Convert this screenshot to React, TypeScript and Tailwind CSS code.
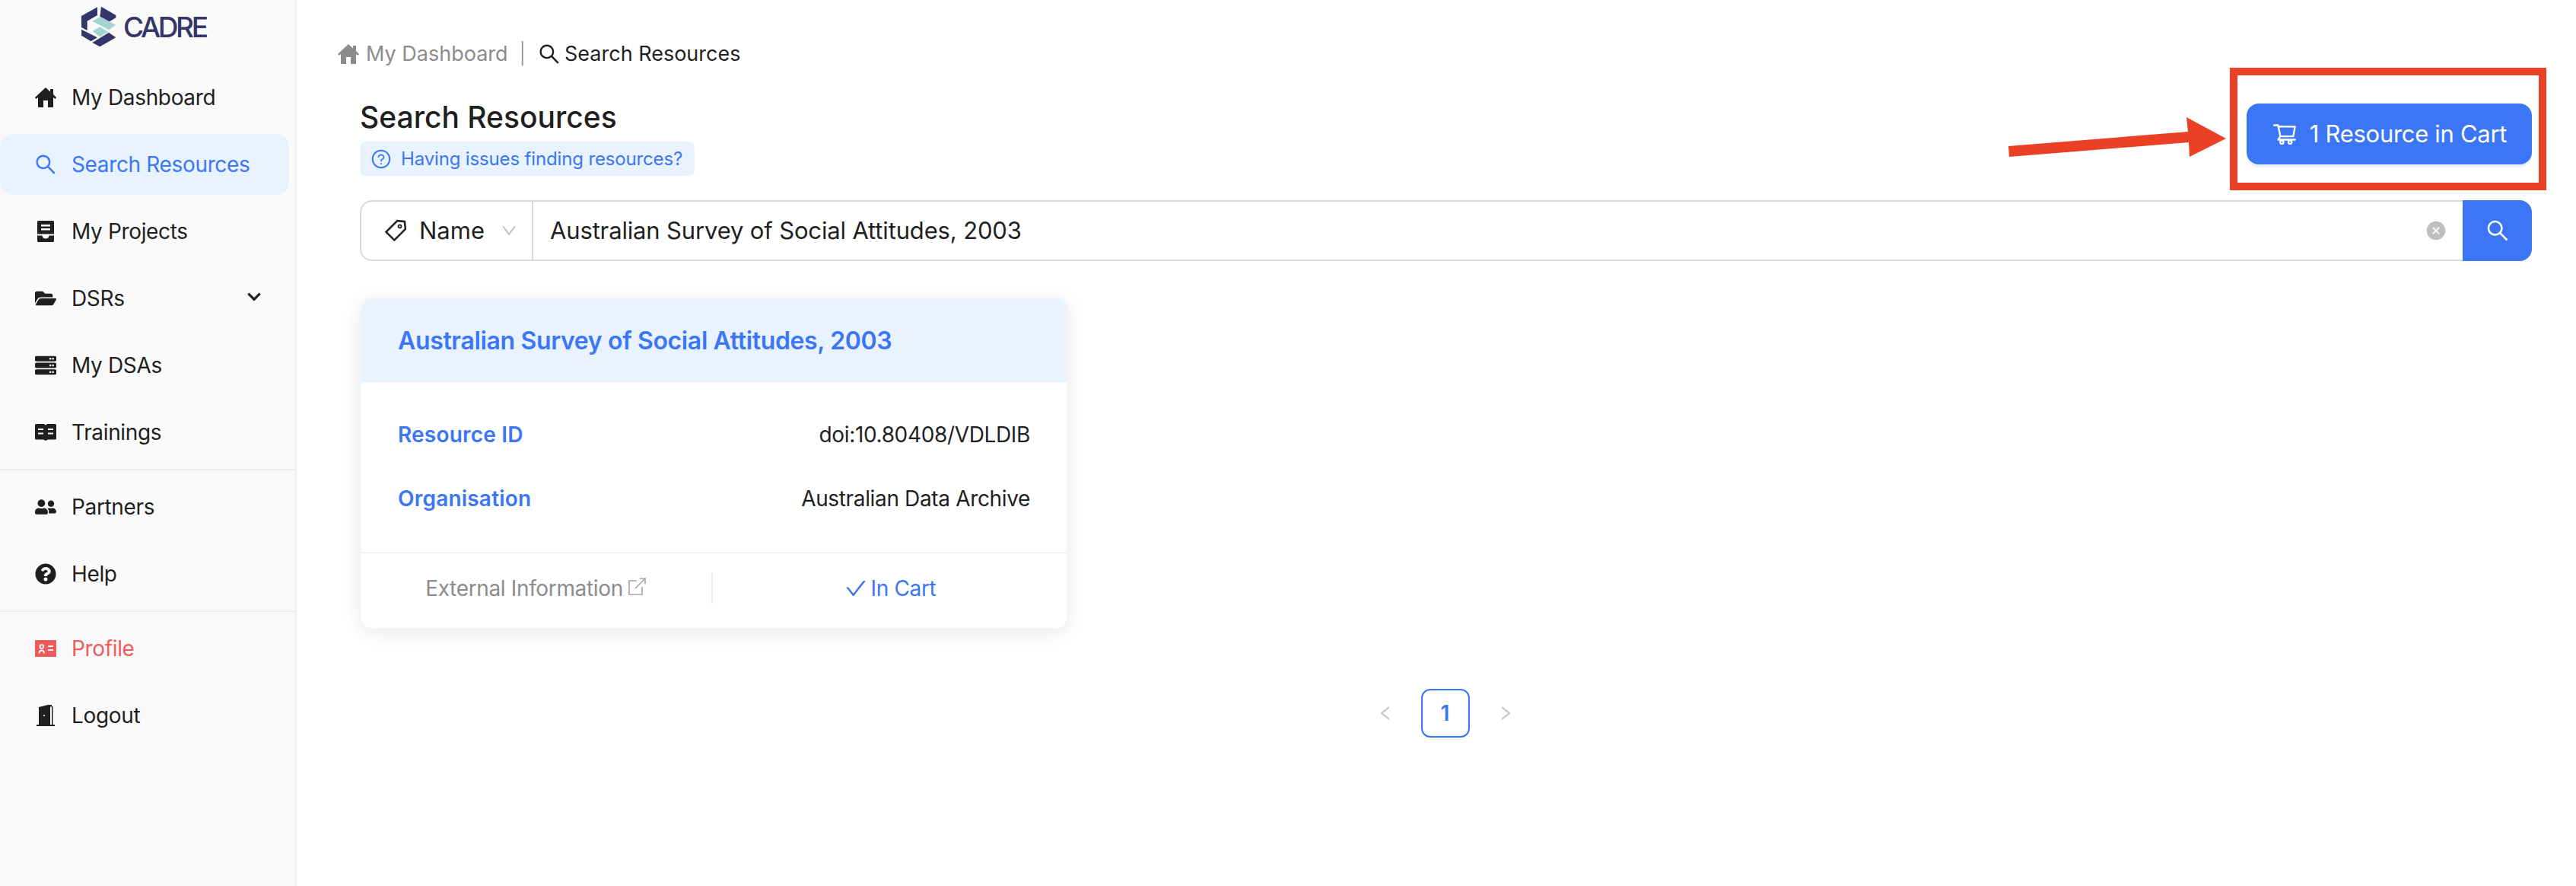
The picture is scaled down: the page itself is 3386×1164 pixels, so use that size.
import React from "react";
import { FaFolderOpen, FaServer, FaUserFriends, FaQuestionCircle, FaChevronDown } from "react-icons/fa";
import { AiOutlineSearch, AiOutlineQuestionCircle, AiOutlineTag, AiOutlineDown, AiOutlineShoppingCart, AiOutlineCheck, AiOutlineLeft, AiOutlineRight, AiFillCloseCircle } from "react-icons/ai";

const ic = "w-[28px] h-[28px] shrink-0";

function HomeIcon({ className }: { className: string }) {
  return (
    <svg className={className} viewBox="0 0 28 28">
      <path fill="currentColor" d="M14 1 L20 6.5 V3 H24 V10 L28 14 L26.5 16 L24 14 V27 H17 V18 H11 V27 H4 V14 L1.5 16 L0 14 Z" />
    </svg>
  );
}

function Logo() {
  return (
    <div className="h-[88px] flex items-start pl-[106px] pt-[8px]">
      <div className="flex items-center gap-[8px]">
        <svg width="48" height="54" viewBox="320 26 142 162">
          <path d="M400 28 L458 62 V72 L430 88 L395 68 Z" fill="#343569" />
          <path d="M385 30 L322 65 V110 L345 122 V85 L385 62 Z" fill="#343569" />
          <path d="M322 118 L385 150 L360 165 L322 142 Z" fill="#343569" />
          <path d="M395 186 L458 150 L430 130 L365 170 Z" fill="#343569" />
          <path d="M365 85 L398 68 L458 100 L430 120 Z" fill="#a3d5d0" />
          <path d="M365 125 L395 108 L428 128 L395 147 Z" fill="#a3d5d0" />
        </svg>
        <span className="font-medium text-[37px] leading-none tracking-[-3.4px] text-[#343569]">CADRE</span>
      </div>
    </div>
  );
}

function NavItem({ icon, label, active, danger, chevron }: { icon: React.ReactNode; label: string; active?: boolean; danger?: boolean; chevron?: boolean }) {
  return (
    <div
      className={`h-[80px] mb-[8px] w-[380px] rounded-[16px] flex items-center pl-[46px] pr-[36px] gap-[20px] text-[28px] tracking-[-0.35px] ${
        active ? "bg-[#e8f3ff] text-[#3b76f6]" : danger ? "text-[#ef5b5b]" : "text-[#1f1f1f]"
      }`}
    >
      {icon}
      <span className="flex-1 whitespace-nowrap">{label}</span>
      {chevron && <FaChevronDown className="w-[20px] h-[20px] text-[#1f1f1f] -mt-[4px]" />}
    </div>
  );
}

function ProjectsIcon() {
  return (
    <svg className={ic} viewBox="0 0 28 28">
      <path fillRule="evenodd" fill="currentColor" d="M3 1.5 A1.5 1.5 0 0 1 4.5 0 h19 A1.5 1.5 0 0 1 25 1.5 v25 a1.5 1.5 0 0 1 -1.5 1.5 h-19 A1.5 1.5 0 0 1 3 26.5 Z M8 5 v2.4 h12 v-2.4 Z M8 10 v2.4 h12 v-2.4 Z M3 17.5 v2 h6.4 c0.6 3 2.4 4 4.6 4 s4 -1 4.6 -4 h6.4 v-2 Z" />
    </svg>
  );
}

function BookIcon() {
  return (
    <svg className={ic} viewBox="0 0 28 28">
      <path fillRule="evenodd" fill="currentColor" d="M1.5 3 H12 l2 1.5 L16 3 H26.5 A1.5 1.5 0 0 1 28 4.5 V22 a1.5 1.5 0 0 1 -1.5 1.5 H17 l-3 1.5 -3 -1.5 H1.5 A1.5 1.5 0 0 1 0 22 V4.5 A1.5 1.5 0 0 1 1.5 3 Z M4 9 v2 h7 v-2 Z M4 14.5 v2 h7 v-2 Z M17 9 v2 h7 v-2 Z M17 14.5 v2 h7 v-2 Z" />
    </svg>
  );
}

function CardIcon() {
  return (
    <svg className={ic} viewBox="0 0 28 28">
      <path fillRule="evenodd" fill="currentColor" d="M0 3 H28 V25 H0 Z M12 11.5 a3.2 3.2 0 1 0 -6.4 0 a3.2 3.2 0 1 0 6.4 0 Z M10.2 11.5 a1.4 1.4 0 1 1 -2.8 0 a1.4 1.4 0 1 1 2.8 0 Z M4.5 20.5 h2 c0.2 -2 1 -3 2.3 -3 s2.2 1 2.4 3 h2 c-0.2 -3.5 -2 -5 -4.4 -5 s-4.1 1.5 -4.3 5 Z M17 10 v2 h7 v-2 Z M17 15 v2 h7 v-2 Z" />
    </svg>
  );
}

function DoorIcon() {
  return (
    <svg className={ic} viewBox="0 0 28 28">
      <path fillRule="evenodd" fill="currentColor" d="M5 26 V3 L17 0 H22 V2 H23.5 V26 H26 V28 H2 V26 Z M20 2.6 V26 H22 V2.6 Z M12 13 a1 1 0 1 0 0.01 0 Z" />
    </svg>
  );
}

function ExternalIcon() {
  return (
    <svg className="w-[28px] h-[28px] text-[#a6a6a6] -mt-[4px]" viewBox="0 0 28 28" fill="none" stroke="currentColor" strokeWidth="1.6">
      <path d="M14 6 H4 V24 H21 V14" />
      <path d="M12 16 L25 3 M18 3 H25 V10" />
    </svg>
  );
}

function Sidebar() {
  return (
    <aside className="w-[390px] shrink-0 bg-[#fafafa] border-r-[2px] border-[#f0f0f0] min-h-[1164px]">
      <Logo />
      <NavItem icon={<HomeIcon className={ic} />} label="My Dashboard" />
      <NavItem icon={<AiOutlineSearch className="w-[32px] h-[32px] -mx-[2px] shrink-0" />} label="Search Resources" active />
      <NavItem icon={<ProjectsIcon />} label="My Projects" />
      <NavItem icon={<FaFolderOpen className={ic} />} label="DSRs" chevron />
      <NavItem icon={<FaServer className={ic} />} label="My DSAs" />
      <NavItem icon={<BookIcon />} label="Trainings" />
      <div className="h-[2px] bg-[#f0f0f0] mb-[8px]" />
      <NavItem icon={<FaUserFriends className={ic} />} label="Partners" />
      <NavItem icon={<FaQuestionCircle className={ic} />} label="Help" />
      <div className="h-[2px] bg-[#f0f0f0] mb-[8px]" />
      <NavItem icon={<CardIcon />} label="Profile" danger />
      <NavItem icon={<DoorIcon />} label="Logout" />
    </aside>
  );
}

function Row({ label, value }: { label: string; value: string }) {
  return (
    <div className="flex justify-between items-center h-[44px] text-[28px]">
      <span className="font-semibold tracking-[0.2px] text-[#3b76f6]">{label}</span>
      <span className="text-[#1f1f1f] tracking-[-0.35px]">{value}</span>
    </div>
  );
}

function Card() {
  return (
    <div className="w-[931px] rounded-[16px] bg-white shadow-[0_4px_24px_rgba(0,0,0,0.09)] border-[2px] border-[#f5f5f5] overflow-hidden">
      <div className="h-[109px] bg-[#e8f3ff] flex items-center pl-[48px] text-[32px] tracking-[-0.35px] font-semibold text-[#3b76f6]">
        Australian Survey of Social Attitudes, 2003
      </div>
      <div className="px-[48px] pt-[47px] pb-[48px] flex flex-col gap-[40px] border-b-[2px] border-[#f0f0f0]">
        <Row label="Resource ID" value="doi:10.80408/VDLDIB" />
        <Row label="Organisation" value="Australian Data Archive" />
      </div>
      <div className="flex items-center h-[98px] pb-[6px] text-[28px] tracking-[-0.35px]">
        <div className="w-[462px] h-[42px] flex items-center justify-center gap-[4px] border-r-[2px] border-[#f0f0f0] text-[#8c8c8c]">
          External Information
          <ExternalIcon />
        </div>
        <div className="flex-1 flex items-center justify-center gap-[4px] text-[#3b76f6]">
          <AiOutlineCheck className="w-[32px] h-[32px]" />
          In Cart
        </div>
      </div>
    </div>
  );
}

export default function App() {
  return (
    <div className="relative flex w-[3386px] h-[1164px] overflow-hidden bg-white font-['Inter',sans-serif]">
      <Sidebar />
      <main className="flex-1 pt-[51px]">
        <div className="pl-[54px] h-[40px] flex items-center text-[27px] text-[#8c8c8c]">
          <HomeIcon className="w-[28px] h-[28px] mr-[9px]" />
          <span>My Dashboard</span>
          <span className="mx-[15px] text-[#8c8c8c] font-light">|</span>
          <AiOutlineSearch className="w-[32px] h-[32px] mr-[4px] text-[#1f1f1f]" />
          <span className="text-[#1f1f1f]">Search Resources</span>
        </div>
        <div className="pl-[83px] pr-[58px]">
          <div className="flex justify-between items-start mt-[39px]">
            <div className="flex flex-col items-start">
              <h1 className="text-[39px] leading-[48px] font-medium text-[#1f1f1f]">Search Resources</h1>
              <div className="mt-[8px] h-[45px] rounded-[8px] bg-[#e8f3ff] flex items-center pl-[14px] pr-[16px] gap-[12px] text-[24px] tracking-[-0.15px] text-[#3b76f6]">
                <AiOutlineQuestionCircle className="w-[28px] h-[28px]" />
                Having issues finding resources?
              </div>
            </div>
            <button className="mt-[6px] w-[375px] h-[80px] rounded-[16px] bg-[#3b76f6] text-white text-[31px] tracking-[-0.3px] flex items-center justify-center gap-[16px] shadow-[0_4px_0_rgba(59,118,246,0.1)]">
              <AiOutlineShoppingCart className="w-[34px] h-[34px]" />
              1 Resource in Cart
            </button>
          </div>
          <div className="mt-[32px] flex h-[80px]">
            <div className="w-[228px] shrink-0 rounded-l-[16px] border-[2px] border-[#d9d9d9] flex items-center pl-[28px] text-[31px] text-[#1f1f1f]">
              <AiOutlineTag className="w-[34px] h-[34px] mr-[14px]" />
              Name
              <AiOutlineDown className="w-[24px] h-[24px] ml-[20px] text-[#bfbfbf]" />
            </div>
            <div className="flex-1 border-y-[2px] border-r-0 border-[#d9d9d9] flex items-center pl-[22px] pr-[21px] text-[31px] tracking-[-0.15px] text-[#1f1f1f]">
              <span className="flex-1">Australian Survey of Social Attitudes, 2003</span>
              <AiFillCloseCircle className="w-[28px] h-[28px] text-[#bfbfbf]" />
            </div>
            <button className="w-[91px] shrink-0 rounded-r-[16px] bg-[#3b76f6] text-white flex items-center justify-center">
              <AiOutlineSearch className="w-[34px] h-[34px]" />
            </button>
          </div>
          <div className="mt-[48px]">
            <Card />
          </div>
          <div className="mt-[78px] flex items-center justify-center gap-[35px] ml-[-2px]">
            <AiOutlineLeft className="w-[24px] h-[24px] text-[#bfbfbf]" />
            <div className="w-[64px] h-[64px] rounded-[12px] border-[2px] border-[#3b76f6] text-[#3b76f6] font-semibold text-[28px] flex items-center justify-center">1</div>
            <AiOutlineRight className="w-[24px] h-[24px] text-[#bfbfbf]" />
          </div>
        </div>
      </main>
      <div className="absolute left-[2931px] top-[89px] w-[416px] h-[161px] border-[10px] border-[#ea4025]" />
      <svg className="absolute left-[2630px] top-[150px]" width="300" height="60" viewBox="0 0 300 60">
        <polygon points="10,42 246,23 244,4 296,32 248,56 247,37 11,56" fill="#ea4025" />
      </svg>
    </div>
  );
}
